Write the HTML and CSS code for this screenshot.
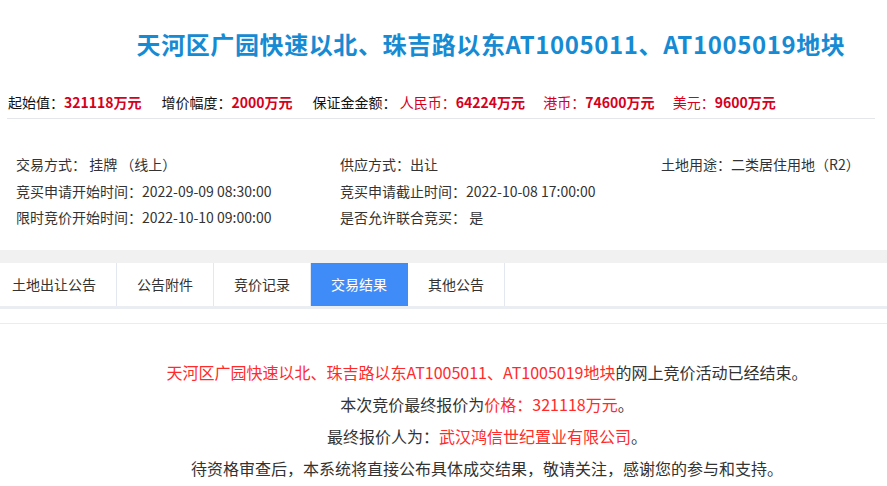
FILE: index.html
```html
<!DOCTYPE html>
<html lang="zh-CN">
<head>
<meta charset="utf-8">
<title>天河区广园快速以北、珠吉路以东AT1005011、AT1005019地块</title>
<link rel="stylesheet" href="styles.css">
</head>
<body>
<div class="page">
  <h1 class="title">天河区广园快速以北、珠吉路以东AT1005011、AT1005019地块</h1>

  <div class="stats">
    <span class="stat"><span class="lbl">起始值：</span><b class="val">321118万元</b></span>
    <span class="stat"><span class="lbl">增价幅度：</span><b class="val">2000万元</b></span>
    <span class="stat deposit"><span class="lbl">保证金金额：</span>
      <span class="cur"><span class="rlbl">人民币：</span><b class="val">64224万元</b></span>
      <span class="cur"><span class="rlbl">港币：</span><b class="val">74600万元</b></span>
      <span class="cur"><span class="rlbl">美元：</span><b class="val">9600万元</b></span>
    </span>
  </div>

  <div class="info">
    <div>交易方式： 挂牌 （线上）</div>
    <div>供应方式：出让</div>
    <div>土地用途：二类居住用地（R2）</div>
    <div>竞买申请开始时间：2022-09-09 08:30:00</div>
    <div>竞买申请截止时间：2022-10-08 17:00:00</div>
    <div></div>
    <div>限时竞价开始时间：2022-10-10 09:00:00</div>
    <div>是否允许联合竞买： 是</div>
    <div></div>
  </div>

  <div class="tabs-wrap">
    <ul class="tabs">
      <li class="tab">土地出让公告</li>
      <li class="tab">公告附件</li>
      <li class="tab">竞价记录</li>
      <li class="tab active">交易结果</li>
      <li class="tab">其他公告</li>
    </ul>
  </div>

  <div class="result">
    <p><span class="red">天河区广园快速以北、珠吉路以东AT1005011、AT1005019地块</span>的网上竞价活动已经结束。</p>
    <p>本次竞价最终报价为<span class="red">价格：321118万元</span>。</p>
    <p>最终报价人为：<span class="red">武汉鸿信世纪置业有限公司</span>。</p>
    <p>待资格审查后，本系统将直接公布具体成交结果，敬请关注，感谢您的参与和支持。</p>
  </div>
</div>
</body>
</html>
```

FILE: styles.css
```css
html, body {
  margin: 0;
  padding: 0;
  background: #fff;
  overflow-x: hidden;
}
body {
  font-family: "Noto Sans CJK SC", "Noto Sans", sans-serif;
  font-size: 14px;
  color: #333;
}
.page {
  width: 887px;
}
.title {
  margin: 0;
  padding: 28px 0 0 95px;
  font-size: 24px;
  line-height: 32px;
  font-weight: bold;
  letter-spacing: 0.6px;
  color: #168bd3;
  text-align: center;
  white-space: nowrap;
}
.stats {
  margin: 32px 12px 0 7px;
  padding: 0 1px 6px;
  border-bottom: 1px solid #e5e6ea;
  line-height: 20px;
  white-space: nowrap;
  display: flex;
  gap: 20px;
}
.lbl {
  color: #111;
}
.val {
  color: #d6001c;
  font-weight: bold;
}
.rlbl {
  color: #d6001c;
}
.cur + .cur {
  margin-left: 15px;
}
.info {
  margin-top: 32px;
  padding-left: 16px;
  display: grid;
  grid-template-columns: 324px 321px 1fr;
  line-height: 26.5px;
  white-space: nowrap;
}
.tabs-wrap {
  margin-top: 19.5px;
  background: #f1f1f1;
  padding-top: 13px;
}
.tabs {
  list-style: none;
  margin: 0;
  padding: 0;
  display: flex;
  background: #fff;
  border-bottom: 3px solid #eaedf2;
}
.tab {
  padding: 0 20px;
  line-height: 43px;
  border-right: 1px solid #e3e8f0;
  color: #333;
  white-space: nowrap;
}
.tab:first-child {
  margin-left: -8px;
}
.tab.active {
  background: #3f8cf8;
  color: #fff;
  border-right-color: #3f8cf8;
}
.result {
  margin-top: 14px;
  border-top: 1px solid #ececec;
  padding: 32px 0 0 87px;
  text-align: center;
  font-size: 16px;
  line-height: 32px;
  color: #333;
}
.result p {
  margin: 0;
  white-space: nowrap;
}
.red {
  color: #ff2b2b;
}
```
